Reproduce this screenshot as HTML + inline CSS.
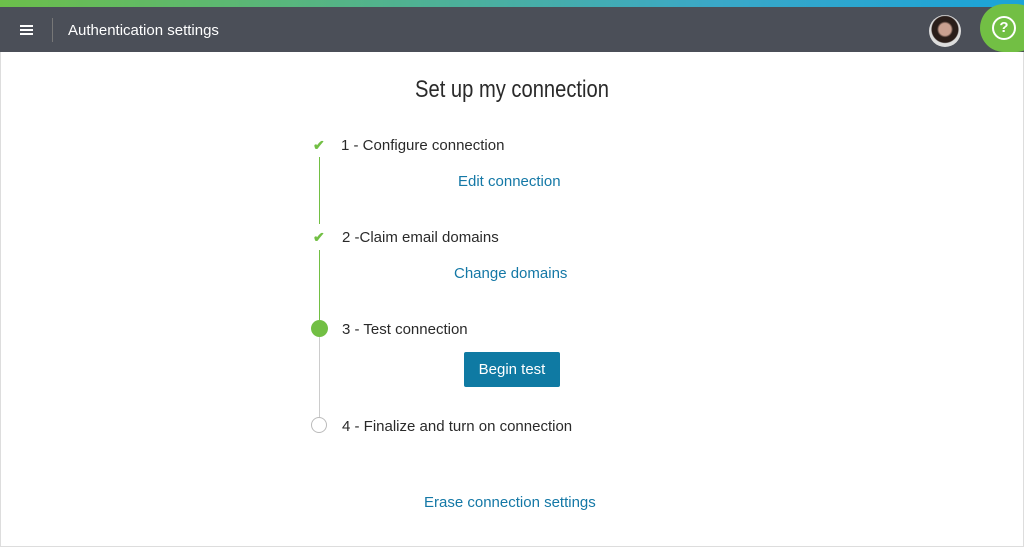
<!DOCTYPE html>
<html><head><style>
body{margin:0;width:1024px;height:548px;overflow:hidden;background:#fff;font-family:"Liberation Sans",sans-serif;position:relative}
.top{position:absolute;left:0;top:0;width:1024px;height:7px;background:linear-gradient(90deg,#6cbf4a,#3aa8c8 70%,#1aa3d8)}
.hdr{position:absolute;left:0;top:7px;width:1024px;height:45px;background:#4b4f58;color:#fff}
.frame{position:absolute;left:0;top:52px;width:1022px;height:494px;border:1px solid #ddd;border-top:none}
.t{position:absolute;font-size:15px;color:#2a2a2a;white-space:nowrap}
.l{position:absolute;font-size:15px;color:#1478a6;white-space:nowrap}
.v{position:absolute;left:319px;width:1px}
.hb{position:absolute;left:20px;width:13px;height:2px;background:#fff}
</style></head><body>
<div class="top"></div>
<div class="hdr">
<div class="hb" style="top:18px"></div><div class="hb" style="top:22px"></div><div class="hb" style="top:26px"></div>
<div style="position:absolute;left:52px;top:11px;width:1px;height:24px;background:#777"></div>
<div style="position:absolute;left:68px;top:15px;font-size:15px">Authentication settings</div>
<div style="position:absolute;left:929px;top:8px;width:32px;height:32px;border-radius:50%;background:radial-gradient(circle at 50% 45%,#c9a090 0 6px,#2a1e1a 8px 13px,#ddd 14px)"></div>
<div style="position:absolute;left:980px;top:-3px;width:60px;height:48px;border-radius:24px;background:#72bf44"></div>
<div style="position:absolute;left:992px;top:9px;width:20px;height:20px;border:2px solid #fff;border-radius:50%;color:#fff;font-weight:bold;font-size:15px;text-align:center;line-height:20px">?</div>
</div>
<div class="frame"></div>
<div style="position:absolute;left:0;width:1024px;top:76px;text-align:center;font-size:24px;color:#2a2a2a;transform:scaleX(0.84)">Set up my connection</div>
<div class="v" style="top:157px;height:67px;background:#72bf44"></div>
<div class="v" style="top:250px;height:70px;background:#72bf44"></div>
<div class="v" style="top:337px;height:80px;background:#ccc"></div>
<div style="position:absolute;left:313px;top:137px;color:#72bf44;font-size:14px;font-weight:bold">✔</div>
<div style="position:absolute;left:313px;top:229px;color:#72bf44;font-size:14px;font-weight:bold">✔</div>
<div style="position:absolute;left:311px;top:320px;width:17px;height:17px;border-radius:50%;background:#72bf44"></div>
<div style="position:absolute;left:311px;top:417px;width:14px;height:14px;border-radius:50%;border:1.5px solid #bbb;background:#fff"></div>
<div class="t" style="left:341px;top:137px">1 - Configure connection</div>
<div class="l" style="left:458px;top:173px">Edit connection</div>
<div class="t" style="left:342px;top:229px">2 -Claim email domains</div>
<div class="l" style="left:454px;top:265px">Change domains</div>
<div class="t" style="left:342px;top:321px">3 - Test connection</div>
<div style="position:absolute;left:464px;top:352px;width:96px;height:35px;background:#0f7aa3;border-radius:2px;color:#fff;font-size:15px;text-align:center;line-height:36px">Begin test</div>
<div class="t" style="left:342px;top:418px">4 - Finalize and turn on connection</div>
<div class="l" style="left:424px;top:494px">Erase connection settings</div>
</body></html>
